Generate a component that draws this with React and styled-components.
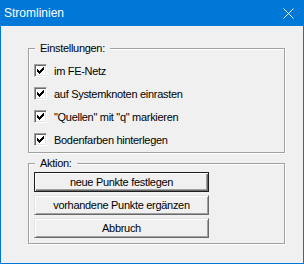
import React from "react";
import styled, { createGlobalStyle } from "styled-components";

const GlobalStyle = createGlobalStyle`
  html, body {
    margin: 0;
    padding: 0;
    background: #ffffff;
  }
  * {
    box-sizing: border-box;
  }
`;

const Frame = styled.div`
  width: 304px;
  height: 264px;
  background: #0078d7;
  padding: 0 1px 1px 1px;
  display: flex;
  flex-direction: column;
  font-family: "Liberation Sans", Arial, sans-serif;
`;

const TitleBar = styled.div`
  height: 26px;
  display: flex;
  align-items: center;
  justify-content: space-between;
  padding: 0 9px 0 3px;
  color: #ffffff;
  font-size: 12px;
  line-height: 26px;
`;

const CloseIcon = styled.svg`
  display: block;
`;

const Body = styled.div`
  flex: 1;
  background: #f0f0f0;
  padding: 22px 18px 0 27px;
  display: flex;
  flex-direction: column;
  gap: 10px;
  font-size: 11px;
  letter-spacing: -0.3px;
  color: #000000;
`;

const Group = styled.div`
  position: relative;
  border: 1px solid #a0a0a0;
  box-shadow: inset 1px 1px 0 #ffffff, 1px 1px 0 #ffffff;
  padding: ${(p) => p.$pad};
  display: flex;
  flex-direction: column;
  gap: ${(p) => p.$gap}px;
`;

const Legend = styled.span`
  position: absolute;
  top: -7px;
  left: 6px;
  padding: 0 5px;
  line-height: 13px;
  background: #f0f0f0;
`;

const Row = styled.label`
  display: flex;
  align-items: center;
  gap: 7px;
  height: 13px;
`;

const Box = styled.span`
  width: 13px;
  height: 13px;
  flex: none;
  background: #ffffff;
  border-top: 1px solid #a0a0a0;
  border-left: 1px solid #a0a0a0;
  border-bottom: 1px solid #ffffff;
  border-right: 1px solid #ffffff;
  box-shadow: inset 1px 1px 0 #696969, inset -1px -1px 0 #e3e3e3;
  display: flex;
`;

const RowText = styled.span`
  line-height: 13px;
  padding-top: 2px;
`;

const Button = styled.button`
  width: 175px;
  height: 20px;
  padding: 0;
  font: inherit;
  letter-spacing: inherit;
  color: #000000;
  background: #f0f0f0;
  border: 1px solid ${(p) => (p.$default ? "#1e1e1e" : "#e3e3e3")};
  border-right-color: ${(p) => (p.$default ? "#1e1e1e" : "#696969")};
  border-bottom-color: ${(p) => (p.$default ? "#1e1e1e" : "#696969")};
  box-shadow: ${(p) =>
    p.$default
      ? "inset 1px 1px 0 #ffffff, inset -1px -1px 0 #696969, inset -2px -2px 0 #a0a0a0"
      : "inset 1px 1px 0 #ffffff, inset -1px -1px 0 #a0a0a0"};
  line-height: 16px;
  text-align: center;
`;

const checkCols = [2, 3, 4, 3, 2, 1, 0];

function Check() {
  return (
    <svg width="11" height="11" viewBox="0 0 11 11" shapeRendering="crispEdges" style={{ display: "block" }}>
      {checkCols.map((y, i) => (
        <rect key={i} x={i + 2} y={y + 2} width="1" height="3" fill="#000" />
      ))}
    </svg>
  );
}

function CheckRow({ children }) {
  return (
    <Row>
      <Box>
        <Check />
      </Box>
      <RowText>{children}</RowText>
    </Row>
  );
}

export default function App() {
  return (
    <>
      <GlobalStyle />
      <Frame>
        <TitleBar>
          <span>Stromlinien</span>
          <CloseIcon width="11" height="11" viewBox="0 0 11 11">
            <path d="M0.5 0.5 L10.5 10.5 M10.5 0.5 L0.5 10.5" stroke="#ffffff" strokeWidth="1" />
          </CloseIcon>
        </TitleBar>
        <Body>
          <Group $pad="15px 0 6px 5px" $gap={10}>
            <Legend>Einstellungen:</Legend>
            <CheckRow>im FE-Netz</CheckRow>
            <CheckRow>auf Systemknoten einrasten</CheckRow>
            <CheckRow>"Quellen" mit "q" markieren</CheckRow>
            <CheckRow>Bodenfarben hinterlegen</CheckRow>
          </Group>
          <Group $pad="8px 0 5px 5px" $gap={3}>
            <Legend>Aktion:</Legend>
            <Button $default>neue Punkte festlegen</Button>
            <Button>vorhandene Punkte ergänzen</Button>
            <Button>Abbruch</Button>
          </Group>
        </Body>
      </Frame>
    </>
  );
}
